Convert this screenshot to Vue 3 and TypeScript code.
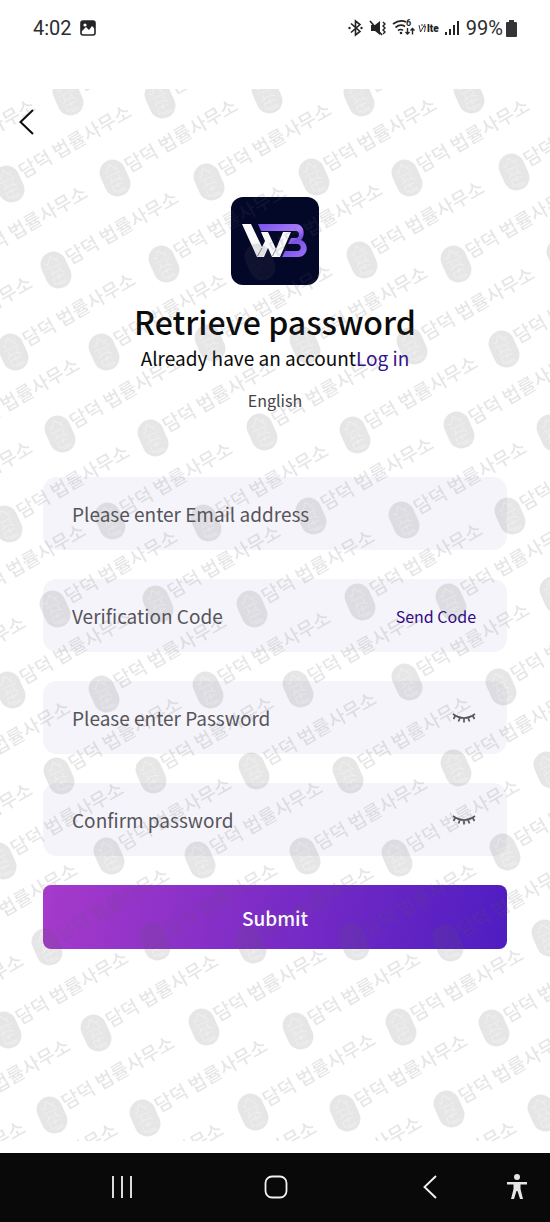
<script setup lang="ts">
import { reactive, ref } from 'vue'

interface Field {
  id: string
  label: string
  type: 'email' | 'text' | 'password'
  trailing: 'none' | 'code' | 'eye'
}

const fields: Field[] = [
  { id: 'email', label: 'Please enter Email address', type: 'email', trailing: 'none' },
  { id: 'code', label: 'Verification Code', type: 'text', trailing: 'code' },
  { id: 'password', label: 'Please enter Password', type: 'password', trailing: 'eye' },
  { id: 'confirm', label: 'Confirm password', type: 'password', trailing: 'eye' },
]

const values = reactive<Record<string, string>>({ email: '', code: '', password: '', confirm: '' })
const shown = reactive<Record<string, boolean>>({})
const language = ref('English')

function inputType(field: Field): string {
  return field.type === 'password' && shown[field.id] ? 'text' : field.type
}

// Centre of each stamp, measured from the top left of the page area.
const marks: [number, number][] = [
  [68, 8], [160, 11], [267, 6], [359, 9], [469, 6],
  [-87, 89], [9, 95], [115, 89], [209, 93], [314, 88], [407, 89], [514, 83],
  [-35, 176], [56, 181], [164, 175], [260, 173], [362, 171], [456, 175], [562, 168],
  [-90, 266], [13, 263], [104, 263], [210, 254], [305, 256], [412, 257], [504, 260],
  [-43, 348], [60, 345], [153, 349], [262, 343], [355, 346], [459, 341], [552, 344],
  [-90, 431], [7, 435], [110, 432], [206, 434], [311, 427], [404, 431], [510, 427],
  [-37, 514], [55, 520], [158, 515], [252, 520], [360, 513], [451, 513], [555, 506],
  [-97, 606], [10, 601], [104, 605], [208, 601], [298, 600], [407, 593], [501, 598],
  [-52, 691], [59, 687], [151, 686], [254, 682], [348, 686], [456, 679], [549, 681],
  [-90, 773], [1, 772], [109, 767], [200, 771], [305, 767], [397, 769], [505, 763],
  [-45, 853], [47, 858], [155, 853], [251, 856], [354, 853], [448, 854], [547, 849],
  [-99, 944], [6, 941], [96, 944], [204, 938], [298, 942], [401, 938], [494, 939],
  [-52, 1029], [52, 1026], [145, 1029], [253, 1023], [345, 1024], [449, 1020], [543, 1024],
  [-97, 1111], [-5, 1113], [101, 1113], [194, 1111], [299, 1106], [394, 1111],
]
</script>

<template>
  <div class="screen">
    <div class="status">
      <div class="status-side">
        <span>4:02</span>
        <svg width="16" height="16" viewBox="0 0 16 16" aria-hidden="true">
          <rect x="1" y="1" width="14" height="14" rx="2" fill="none" stroke="#242426" stroke-width="1.6" />
          <path d="M1 1h14v8l-3-3-3 4-3-3-5 5z" fill="#242426" />
          <circle cx="5" cy="5" r="1.6" fill="#fff" />
        </svg>
      </div>
      <div class="status-side">
        <svg width="115" height="20" viewBox="0 0 115 20" aria-hidden="true">
          <g fill="none" stroke="#242426" stroke-width="1.6">
            <path d="M3 5.5l9 8-4.500 3.500v-14l4.500 3.500-9 8" />
          </g>
          <circle cx="1.500" cy="10" r="1.200" fill="#242426" />
          <circle cx="13.500" cy="10" r="1.200" fill="#242426" />
          <path d="M23 7h4l5-4v14l-5-4h-4z" fill="#242426" />
          <path d="M22 3l12 14" stroke="#242426" stroke-width="1.600" />
          <path d="M35 4l2 2-2 2 2 2-2 2 2 2-2 2" fill="none" stroke="#242426" stroke-width="1.400" />
          <g fill="none" stroke="#242426" stroke-width="1.700">
            <path d="M45 6q7-5 13-2" />
            <path d="M47.500 9.500q5-4 9.500-1" />
            <path d="M50 12.500q3-2 5 0" />
          </g>
          <circle cx="53" cy="15" r="1.300" fill="#242426" />
          <text x="58" y="8" font-family="Roboto, sans-serif" font-size="9" font-weight="700" fill="#242426">6</text>
          <path d="M59.500 10v6M57.500 14l2 2 2-2M64.500 16.500v-6M62.500 12.500l2-2 2 2" fill="none" stroke="#242426" stroke-width="1.400" />
          <path d="M71 7l1.500 7 4.500-8M76 9l1.500-1-1 6M73 7h2" fill="none" stroke="#242426" stroke-width="0.900" />
          <text x="79" y="14" font-family="Roboto, sans-serif" font-size="10" font-weight="900" fill="#242426">lte</text>
          <path d="M98 14v3M102 11v6M106 7v10M110 3v14" stroke="#242426" stroke-width="2" />
        </svg>
        <span>99%</span>
        <svg width="11" height="17" viewBox="0 0 11 17" aria-hidden="true">
          <path d="M3 0h5v2h2q1 0 1 1v13q0 1-1 1H1q-1 0-1-1V3q0-1 1-1h2z" fill="#343436" />
        </svg>
      </div>
    </div>

    <main class="page">
      <header class="top">
        <button type="button" class="back" aria-label="Back">
          <svg width="16" height="26" viewBox="0 0 16 26" aria-hidden="true">
            <path d="M14 1L1.500 13 14 25" fill="none" stroke="#0b0b0b" stroke-width="2" />
          </svg>
        </button>
      </header>

      <svg class="logo" viewBox="0 0 88 88" role="img" aria-label="WB">
        <defs>
          <linearGradient id="logoB" x1="0" y1="0" x2="1" y2="1">
            <stop offset="0" stop-color="#7952ea" />
            <stop offset="0.500" stop-color="#a77cf8" />
            <stop offset="0.650" stop-color="#7b50e8" />
            <stop offset="1" stop-color="#9a74f5" />
          </linearGradient>
        </defs>
        <rect width="88" height="88" rx="12" fill="#030728" />
        <path d="M27 27H65C73 27 75 38 70 43C79 47 77 60 67 60H51L54 54H66C71 54 71 47 66 47H57L60 41H65C69 41 69 34 65 34H30Z" fill="url(#logoB)" />
        <path d="M28 34H38L46 51L52 34H61L49 61H39Z" fill="#030728" />
        <path d="M11 27H20L31 50L34 44L30 35H37L45 52L52 35H60L49 60H41L37 51L33 60H26Z" fill="#fafafc" />
        <path d="M26.500 59L31 51M41.500 59L45 52" stroke="#8a8a94" stroke-width="1" />
      </svg>

      <h1>Retrieve password</h1>
      <p class="account">Already have an account<a href="#login">Log in</a></p>
      <button type="button" class="language">{{ language }}</button>

      <form @submit.prevent>
        <div v-for="field in fields" :key="field.id" class="field">
          <input
            :id="field.id"
            v-model="values[field.id]"
            :type="inputType(field)"
            :placeholder="field.label"
            :aria-label="field.label"
          />
          <button v-if="field.trailing === 'code'" type="button" class="send">Send Code</button>
          <button
            v-if="field.trailing === 'eye'"
            type="button"
            class="eye"
            :aria-label="'Show ' + field.id"
            @click="shown[field.id] = !shown[field.id]"
          >
            <svg width="24" height="12" viewBox="0 0 24 12" aria-hidden="true">
              <path
                d="M1 2Q12 10 23 2M3.500 3.500L1.500 7M8 5.500L6.500 9.500M12 6V10.500M16 5.500L17.500 9.500M20.500 3.500L22.500 7"
                fill="none"
                stroke="#55555b"
                stroke-width="1.700"
              />
            </svg>
          </button>
        </div>
        <button type="submit" class="submit">Submit</button>
      </form>

      <svg class="watermark" aria-hidden="true">
        <defs>
          <mask id="carving" maskUnits="userSpaceOnUse" x="-16" y="-22" width="32" height="44">
            <rect x="-16" y="-22" width="32" height="44" fill="#fff" />
            <path
              d="M0-15L-6-7M0-15L6-6M-8-4H8M-4-2V3M4-2V3M-7 4Q0-1 7 4M-6 7H6M-6 7V13H6M0 4V10M-3 15H7M-8-10L-5-8M7-11L4-9"
              fill="none"
              stroke="#aaa"
              stroke-width="1"
            />
          </mask>
          <g id="stamp">
            <g transform="rotate(6)">
              <rect x="-13" y="-19" width="26" height="38" rx="13" mask="url(#carving)" />
            </g>
            <text x="15" y="3">담덕 법률사무소</text>
          </g>
        </defs>
        <use v-for="([x, y], i) in marks" :key="i" href="#stamp" :transform="`translate(${x} ${y}) rotate(-30)`" />
      </svg>
    </main>

    <nav class="system" aria-label="System">
      <button type="button" aria-label="Recent apps">
        <svg width="22" height="24" viewBox="0 0 22 24" aria-hidden="true">
          <path d="M2 1v22M11 1v22M20 1v22" stroke="#f2f2f2" stroke-width="1.800" />
        </svg>
      </button>
      <button type="button" aria-label="Home">
        <svg width="24" height="24" viewBox="0 0 24 24" aria-hidden="true">
          <rect x="1.500" y="1.500" width="21" height="21" rx="6.500" fill="none" stroke="#f2f2f2" stroke-width="1.800" />
        </svg>
      </button>
      <button type="button" aria-label="Back">
        <svg width="14" height="24" viewBox="0 0 14 24" aria-hidden="true">
          <path d="M13 1L1.500 12 13 23" fill="none" stroke="#f2f2f2" stroke-width="1.900" />
        </svg>
      </button>
      <button type="button" aria-label="Accessibility">
        <svg width="20" height="25" viewBox="0 0 20 25" aria-hidden="true">
          <circle cx="10" cy="3" r="3" fill="#e6e6e6" />
          <path d="M0 8H20V10.500H13.500V15L16 25H13L10.500 17H9.500L7 25H4L6.500 15V10.500H0Z" fill="#e6e6e6" />
        </svg>
      </button>
    </nav>
  </div>
</template>

<style>
body {
  background: #fff;
}
</style>

<style scoped>
.screen {
  display: flex;
  flex-direction: column;
  min-height: 100vh;
  font-family: "Noto Sans CJK KR", "Noto Sans", sans-serif;
  color: #0b0b0b;
}

button {
  margin: 0;
  padding: 0;
  border: 0;
  background: none;
  color: inherit;
  font: inherit;
  cursor: pointer;
}

svg {
  display: block;
  flex: none;
}

.status {
  display: flex;
  align-items: center;
  justify-content: space-between;
  height: 56px;
  margin-bottom: 33px;
  padding: 0 33px;
  font-family: Roboto, sans-serif;
  font-size: 20px;
  color: #2c2c2e;
}

.status-side {
  display: flex;
  align-items: center;
  gap: 8px;
}

.status-side:last-child {
  gap: 3px;
}

.page {
  position: relative;
  flex: 1;
  display: flex;
  flex-direction: column;
  align-items: center;
  overflow: hidden;
  margin-bottom: 12px;
}

.top {
  display: flex;
  align-items: center;
  align-self: stretch;
  height: 66px;
  padding: 0 19px;
}

.logo {
  width: 88px;
  height: 88px;
  margin-top: 42px;
}

h1 {
  margin: 12px 0 0;
  font-size: 32px;
  font-weight: 500;
  line-height: 48px;
}

.account {
  margin: 0;
  font-size: 19px;
  line-height: 26px;
}

.account a {
  color: #34108f;
  text-decoration: none;
}

.language {
  margin-top: 17px;
  font-size: 16px;
  line-height: 24px;
  color: #444448;
}

form {
  display: flex;
  flex-direction: column;
  gap: 29px;
  align-self: stretch;
  margin: 65px 43px 0;
}

.field {
  display: flex;
  align-items: center;
  height: 73px;
  padding: 0 31px 0 29px;
  border-radius: 14px;
  background: #f5f4fa;
}

input {
  flex: 1;
  min-width: 0;
  padding: 0;
  border: 0;
  outline: 0;
  background: none;
  font: inherit;
  font-size: 19px;
  line-height: 32px;
  color: #1d1d1f;
}

input::placeholder {
  color: #55555a;
  opacity: 1;
}

.send {
  font-size: 16px;
  color: #310a84;
}

.submit {
  height: 64px;
  border-radius: 8px;
  background: linear-gradient(100deg, #a63acb, #4f1dc1);
  color: #fff;
  font-size: 19px;
  font-weight: 500;
}

.watermark {
  position: absolute;
  inset: 0;
  width: 100%;
  height: 100%;
  pointer-events: none;
  fill: #5c5c5c;
  opacity: 0.15;
  font-size: 19px;
  font-weight: 500;
}

.system {
  display: grid;
  grid-template-columns: 1fr 1fr 1fr 19px;
  box-sizing: border-box;
  height: 69px;
  padding: 0 24px 2px 45px;
  background: #090909;
}

.system button {
  display: flex;
  align-items: center;
  justify-content: center;
}
</style>
